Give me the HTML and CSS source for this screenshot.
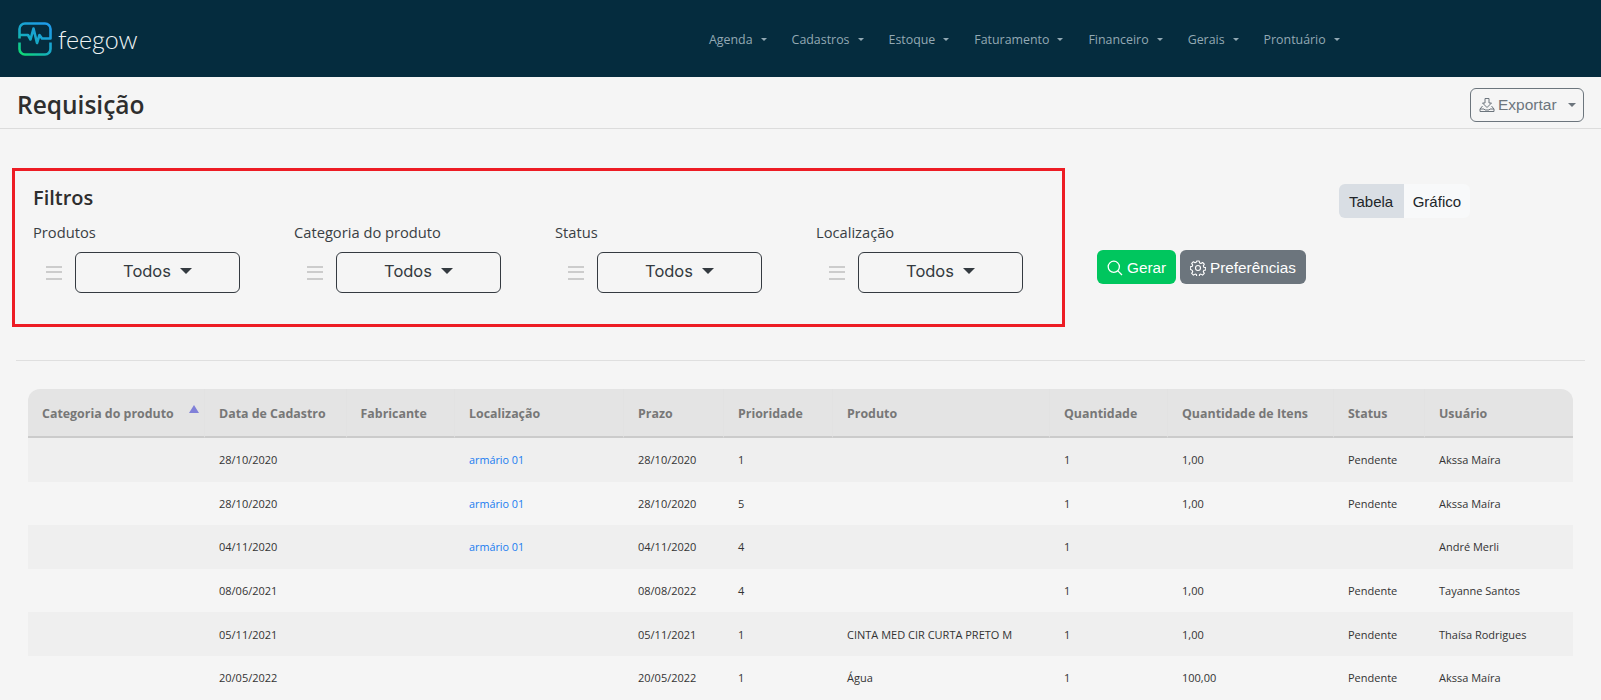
FILE: index.html
```html
<!DOCTYPE html>
<html lang="pt-BR">
<head>
<meta charset="utf-8">
<title>Requisição</title>
<link rel="stylesheet" href="styles.css">
</head>
<body>
<header class="navbar">
  <a class="brand">
    <svg class="brand-icon" width="34" height="34" viewBox="0 0 34 34" fill="none">
      <defs><linearGradient id="lg" x1="0.8" y1="0" x2="0.1" y2="1"><stop offset="0" stop-color="#1e9be8"/><stop offset="0.55" stop-color="#16a9c4"/><stop offset="1" stop-color="#0fd877"/></linearGradient></defs>
      <path d="M1.500 16.500V7A5.500 5.500 0 0 1 7 1.500h20A5.500 5.500 0 0 1 32.500 7v9.500H24l-2.500-3.500-2.500 8-3.500-14.500-3 11-2.500-4.500H1.500M1.500 20.500V27A5.500 5.500 0 0 0 7 32.500h20a5.500 5.500 0 0 0 5.500-5.500v-6.500" stroke="url(#lg)" stroke-width="2.600" stroke-linejoin="round"/>
    </svg>
    <span class="brand-name">feegow</span>
  </a>
  <nav class="menu">
    <a class="menu-item caret">Agenda</a>
    <a class="menu-item caret">Cadastros</a>
    <a class="menu-item caret">Estoque</a>
    <a class="menu-item caret">Faturamento</a>
    <a class="menu-item caret">Financeiro</a>
    <a class="menu-item caret">Gerais</a>
    <a class="menu-item caret">Prontuário</a>
  </nav>
</header>

<div class="titlebar">
  <h1 class="page-title">Requisição</h1>
  <button class="btn-export caret">
    <svg width="16" height="16" viewBox="0 0 16 16" fill="none" stroke="#6c757d" stroke-width="1"><path d="M6 1.500h4v4.500h2.500L8 10.500 3.500 6H6z"/><path d="M3.500 9 1 12v2.500h14V12l-2.500-3"/><path d="M1 12h4l1 1h4l1-1h4"/></svg>
    Exportar
  </button>
</div>

<section class="filter-row">
  <form class="filter-box">
    <h2 class="filter-title">Filtros</h2>
    <div class="filter-grid">
      <div class="filter">
        <label class="filter-label">Produtos</label>
        <div class="filter-control"><span class="handle"></span><button type="button" class="select caret">Todos</button></div>
      </div>
      <div class="filter">
        <label class="filter-label">Categoria do produto</label>
        <div class="filter-control"><span class="handle"></span><button type="button" class="select caret">Todos</button></div>
      </div>
      <div class="filter">
        <label class="filter-label">Status</label>
        <div class="filter-control"><span class="handle"></span><button type="button" class="select caret">Todos</button></div>
      </div>
      <div class="filter">
        <label class="filter-label">Localização</label>
        <div class="filter-control"><span class="handle"></span><button type="button" class="select caret">Todos</button></div>
      </div>
    </div>
  </form>
  <div class="actions">
    <button class="btn btn-green">
      <svg width="16" height="16" viewBox="0 0 16 16" fill="none" stroke="#fff" stroke-width="1.300"><circle cx="6.800" cy="6.800" r="5.600"/><path d="M10.900 10.900 15 15"/></svg>
      Gerar
    </button>
    <button class="btn btn-gray">
      <svg width="16" height="16" viewBox="0 0 16 16" fill="none" stroke="#fff" stroke-width="1.100"><circle cx="8" cy="8" r="2.500"/><path d="M6.800 1h2.400l.4 1.900 1.300.6 1.700-1 1.700 1.700-1 1.700.5 1.300 1.900.4v2.400l-1.900.4-.5 1.300 1 1.700-1.700 1.700-1.700-1-1.300.5-.4 1.900H6.800l-.4-1.900-1.300-.5-1.700 1-1.700-1.700 1-1.700-.5-1.300L.3 9.200V6.800l1.900-.4.500-1.300-1-1.700 1.700-1.700 1.700 1 1.300-.6z" stroke-linejoin="round"/></svg>
      Preferências
    </button>
  </div>
  <div class="tabs">
    <button class="tab tab-active">Tabela</button>
    <button class="tab tab-plain">Gráfico</button>
  </div>
</section>

<hr class="divider">

<div class="table-wrap">
<table class="data">
  <colgroup>
    <col class="c1"><col class="c2"><col class="c3"><col class="c4"><col class="c5"><col class="c6"><col class="c7"><col class="c8"><col class="c9"><col class="c10"><col class="c11">
  </colgroup>
  <thead>
    <tr>
      <th class="sorted">Categoria do produto</th><th>Data de Cadastro</th><th>Fabricante</th><th>Localização</th><th>Prazo</th><th>Prioridade</th><th>Produto</th><th>Quantidade</th><th>Quantidade de Itens</th><th>Status</th><th>Usuário</th>
    </tr>
  </thead>
  <tbody>
    <tr><td></td><td>28/10/2020</td><td></td><td><a class="link">armário 01</a></td><td>28/10/2020</td><td>1</td><td></td><td>1</td><td>1,00</td><td>Pendente</td><td>Akssa Maíra</td></tr>
    <tr><td></td><td>28/10/2020</td><td></td><td><a class="link">armário 01</a></td><td>28/10/2020</td><td>5</td><td></td><td>1</td><td>1,00</td><td>Pendente</td><td>Akssa Maíra</td></tr>
    <tr><td></td><td>04/11/2020</td><td></td><td><a class="link">armário 01</a></td><td>04/11/2020</td><td>4</td><td></td><td>1</td><td></td><td></td><td>André Merli</td></tr>
    <tr><td></td><td>08/06/2021</td><td></td><td></td><td>08/08/2022</td><td>4</td><td></td><td>1</td><td>1,00</td><td>Pendente</td><td>Tayanne Santos</td></tr>
    <tr><td></td><td>05/11/2021</td><td></td><td></td><td>05/11/2021</td><td>1</td><td>CINTA MED CIR CURTA PRETO M</td><td>1</td><td>1,00</td><td>Pendente</td><td>Thaísa Rodrigues</td></tr>
    <tr><td></td><td>20/05/2022</td><td></td><td></td><td>20/05/2022</td><td>1</td><td>Água</td><td>1</td><td>100,00</td><td>Pendente</td><td>Akssa Maíra</td></tr>
  </tbody>
</table>
</div>
</body>
</html>
```

FILE: styles.css
```css
* { box-sizing: border-box; }
html, body { margin: 0; padding: 0; }
body {
  background: #f5f5f5;
  font-family: "Open Sans", sans-serif;
  color: #212529;
  overflow: hidden;
  height: 700px;
}
button { font-family: "Liberation Sans", Arial, sans-serif; cursor: pointer; }
button svg { flex: none; }

.caret::after {
  content: "";
  display: inline-block;
  border-top: 0.3em solid;
  border-left: 0.3em solid transparent;
  border-right: 0.3em solid transparent;
  margin-left: 0.5em;
  vertical-align: 0.2em;
}

.navbar {
  height: 77px;
  background: #052c3e;
  display: flex;
  align-items: center;
  position: relative;
}
.brand {
  display: flex;
  align-items: center;
  margin-left: 18px;
  gap: 6px;
  width: 144px;
}
.brand-icon { display: block; flex: none; }
.brand-name {
  font-family: "Lato", sans-serif;
  font-weight: 300;
  font-size: 25px;
  color: #f0f4f5;
  line-height: 34px;
}
.menu {
  display: flex;
  margin-left: 547px;
  gap: 25px;
  align-items: center;
  padding-top: 2px;
}
.menu-item {
  font-size: 12.400px;
  color: #93a9b4;
  line-height: 18px;
}
.menu-item::after { margin-left: 8px; }

.titlebar {
  height: 52px;
  display: flex;
  align-items: center;
  justify-content: space-between;
  padding: 4px 17px 0;
  border-bottom: 1px solid #dcdcdc;
}
.page-title {
  margin: 0;
  font-size: 24.500px;
  font-weight: 600;
  color: #2e2e2e;
  line-height: 36px;
}
.btn-export {
  width: 114px;
  height: 34px;
  border: 1px solid #6c757d;
  border-radius: 6px;
  background: transparent;
  color: #6c757d;
  font-size: 15.500px;
  display: flex;
  align-items: center;
  gap: 3px;
  padding: 0 7px 0 8px;
  white-space: nowrap;
}
.btn-export::after { flex: none; margin-left: 8px; }

.filter-row {
  display: flex;
  align-items: flex-start;
  margin-top: 39px;
  padding-left: 12px;
}
.filter-box {
  width: 1053px;
  height: 159px;
  border: 3px solid #ed1c24;
  padding: 13px 18px;
  flex: none;
}
.filter-title {
  margin: 0;
  font-size: 20px;
  font-weight: 600;
  line-height: 28px;
  color: #2e2e2e;
}
.filter-grid {
  display: grid;
  grid-template-columns: repeat(4, 261px);
  margin-top: 10px;
}
.filter-label {
  display: block;
  font-size: 14.700px;
  line-height: 20px;
  color: #3a3f44;
}
.filter-control {
  display: flex;
  align-items: center;
  padding-left: 13px;
  margin-top: 10px;
}
.handle {
  width: 16px;
  height: 14px;
  border-top: 2px solid #ccc;
  border-bottom: 2px solid #ccc;
  position: relative;
  margin-right: 13px;
}
.handle::after {
  content: "";
  position: absolute;
  left: 0;
  right: 0;
  top: 3px;
  height: 2px;
  background: #ccc;
}
.select {
  width: 165px;
  height: 41px;
  border: 1px solid #343a40;
  border-radius: 6px;
  background: transparent;
  font-size: 16.500px;
  color: #343a40;
  padding: 0 0 3px;
  font-family: "Inter", "Liberation Sans", sans-serif;
}
.select::after {
  margin-left: 9px;
  border-top-width: 6px;
  border-left-width: 6px;
  border-right-width: 6px;
}

.actions {
  display: flex;
  gap: 4px;
  margin-top: 82px;
  margin-left: 32px;
}
.btn {
  height: 34px;
  border: 0;
  border-radius: 6px;
  color: #fff;
  font-size: 15.300px;
  display: flex;
  align-items: center;
  gap: 4px;
  padding: 1px 10px 0;
  white-space: nowrap;
}
.btn-green { background: #00c65e; width: 79px; }
.btn-gray { background: #6c757d; width: 126px; }

.tabs {
  display: flex;
  margin-left: 33px;
  margin-top: 16px;
}
.tab {
  height: 34px;
  border: 0;
  color: #212529;
  font-size: 15px;
  padding: 0 10px;
}
.tab-plain {
  background: #f8f9fa;
  border-radius: 0 6px 6px 0;
  padding: 0 9px;
}
.tab-active {
  background: #d9dee4;
  border-radius: 6px 0 0 6px;
  padding: 0 10.500px 0 10px;
}

.divider {
  margin: 33px 16px 0;
  border: 0;
  border-top: 1px solid #dfdfdf;
}

.table-wrap { padding: 28px 28px 0; }
.data {
  width: 1545px;
  table-layout: fixed;
  border-collapse: separate;
  border-spacing: 0;
  font-size: 11px;
}
.c1 { width: 177px; }
.c2 { width: 141.500px; }
.c3 { width: 108.500px; }
.c4 { width: 169px; }
.c5 { width: 100px; }
.c6 { width: 109px; }
.c7 { width: 217px; }
.c8 { width: 118px; }
.c9 { width: 166px; }
.c10 { width: 91px; }
.c11 { width: 148px; }
.data th {
  height: 49px;
  background: #e4e4e4;
  border-bottom: 2px solid #cbcbcb;
  border-right: 1px solid #e2e2e2;
  text-align: left;
  padding: 2px 14px 0;
  font-size: 12.400px;
  font-weight: 700;
  color: #777;
  white-space: nowrap;
}
.data th:first-child { border-top-left-radius: 12px; }
.data th:last-child { border-top-right-radius: 12px; border-right: 0; }
.sorted { position: relative; }
.sorted::after {
  content: "";
  position: absolute;
  right: 5px;
  top: 16px;
  border-bottom: 8px solid #8080d8;
  border-left: 5px solid transparent;
  border-right: 5px solid transparent;
}
.data td {
  height: 43.600px;
  padding: 0 14px;
  color: #333;
  white-space: nowrap;
}
.data tbody tr:nth-child(odd) td { background: #efefef; }
.link { color: #1a7cf0; font-size: 10.800px; }
```
